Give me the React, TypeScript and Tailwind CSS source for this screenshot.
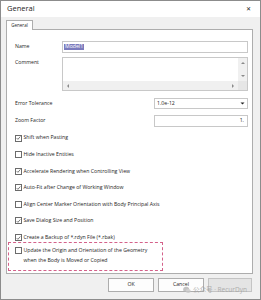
import React from 'react';

const font = { fontFamily: '"Open Sans", "Noto Sans CJK SC", sans-serif' };

const Check: React.FC<{ checked?: boolean }> = ({ checked }) => (
  <span className="w-[7px] h-[7px] border border-[#6b6b6b] bg-white flex items-center justify-center shrink-0">
    {checked && (
      <svg width="6" height="6" viewBox="0 0 6 6">
        <path d="M0.8 3.1 L2.3 4.6 L5.2 1.2" fill="none" stroke="#333" strokeWidth="0.8" />
      </svg>
    )}
  </span>
);

const options: { label: string; checked: boolean }[] = [
  { label: 'Shift when Pasting', checked: true },
  { label: 'Hide Inactive Entities', checked: false },
  { label: 'Accelerate Rendering when Controlling View', checked: true },
  { label: 'Auto-Fit after Change of Working Window', checked: true },
  { label: 'Align Center Marker Orientation with Body Principal Axis', checked: false },
  { label: 'Save Dialog Size and Position', checked: true },
  { label: 'Create a Backup of *.rdyn File (*.rbak)', checked: true },
];

const Arrow: React.FC<{ dir: 'up' | 'down' | 'left' | 'right' }> = ({ dir }) => {
  const d = {
    up: 'M1 4 L3 2 L5 4 Z',
    down: 'M1 2 L3 4 L5 2 Z',
    left: 'M4 1 L2 3 L4 5 Z',
    right: 'M2 1 L4 3 L2 5 Z',
  }[dir];
  return (
    <svg width="6" height="6" viewBox="0 0 6 6">
      <path d={d} fill="#8a8a8a" />
    </svg>
  );
};

export default function App() {
  return (
    <div
      className="w-[261px] h-[300px] bg-[#f0f0f0] border border-[#8c8c8c] flex flex-col relative overflow-hidden text-[#1e1e1e]"
      style={font}
    >
      <div className="h-[16px] bg-white flex items-center justify-between pl-[6px] pr-[9px]">
        <span className="text-[7.5px] leading-none">General</span>
        <span className="text-[6px] leading-none">✕</span>
      </div>

      <div className="pl-[5px] pt-[3px]">
        <div className="w-[27px] h-[10px] border border-b-0 border-[#adadad] bg-white text-[4.5px] flex items-center justify-center relative z-10 -mb-px">
          General
        </div>
        <div className="w-[247px] h-[245px] border border-[#adadad] bg-white pl-[8px] pr-[4px] flex flex-col text-[5.2px] leading-none">
          <div className="mt-[11px] flex items-center h-[12px]">
            <span className="w-[47px]">Name</span>
            <div className="flex-1 h-[12px] border border-[#c8c8c8] flex items-center pl-px">
              <span className="bg-[#7b7bbd] text-white px-px">Model1</span>
            </div>
          </div>

          <div className="mt-[4px] flex items-start">
            <span className="w-[47px] pt-[3px]">Comment</span>
            <div className="flex-1 h-[34px] border border-[#c8c8c8] flex flex-col">
              <div className="flex-1 flex">
                <div className="flex-1" />
                <div className="w-[9px] bg-[#f0f0f0] flex flex-col items-center justify-between py-[2px]">
                  <Arrow dir="up" />
                  <Arrow dir="down" />
                </div>
              </div>
              <div className="h-[9px] flex">
                <div className="flex-1 bg-[#f0f0f0] flex items-center justify-between px-[2px]">
                  <Arrow dir="left" />
                  <Arrow dir="right" />
                </div>
                <div className="w-[9px] bg-[#e6e6e6]" />
              </div>
            </div>
          </div>

          <div className="mt-[7px] flex items-center justify-between">
            <span>Error Tolerance</span>
            <div className="w-[94px] h-[11px] border border-[#c8c8c8] flex items-center justify-between pl-[2px] pr-[2px]">
              <span>1.0e-12</span>
              <svg width="5" height="5" viewBox="0 0 5 5">
                <path d="M0.5 1.5 L2.5 3.5 L4.5 1.5 Z" fill="#222" />
              </svg>
            </div>
          </div>

          <div className="mt-[6px] flex items-center justify-between">
            <span>Zoom Factor</span>
            <div className="w-[94px] h-[12px] border border-[#c8c8c8] flex items-center justify-end pr-[3px]">
              <span>1.</span>
            </div>
          </div>

          <div className="mt-[7.5px] flex flex-col gap-[9.6px]">
            {options.map((o) => (
              <div key={o.label} className="flex items-center gap-[1.5px] h-[7px]">
                <Check checked={o.checked} />
                <span className="whitespace-nowrap">{o.label}</span>
              </div>
            ))}
          </div>

          <div className="mt-[0.5px] -ml-[7px] w-[155px] h-[29px] border border-dashed border-[#d4618a] pl-[6px] pt-[4.5px] flex flex-col gap-[4px]">
            <div className="flex items-center gap-[1.5px] h-[7px]">
              <Check />
              <span className="whitespace-nowrap">Update the Origin and Orientation of the Geometry</span>
            </div>
            <span className="pl-[8.5px] whitespace-nowrap">when the Body is Moved or Copied</span>
          </div>
        </div>
      </div>

      <div className="mt-[4px] flex justify-end gap-[4px] pr-[8px] text-[5.2px]">
        <div className="w-[46px] h-[14px] border border-[#adadad] bg-[#fdfdfd] flex items-center justify-center">OK</div>
        <div className="w-[46px] h-[14px] border border-[#adadad] bg-[#fdfdfd] flex items-center justify-center">Cancel</div>
        <div className="w-[44px] h-[14px] border border-[#c4c4c4] bg-[#e4e4e4]" />
      </div>

      <div className="absolute left-[182px] top-[285px] flex items-center gap-[2px] text-[#a0a0a0] opacity-80">
        <svg width="8" height="8" viewBox="0 0 8 8">
          <ellipse cx="3.2" cy="3.4" rx="3" ry="2.6" fill="#b5b5b5" />
          <ellipse cx="5.2" cy="5" rx="2.5" ry="2.1" fill="#c8c8c8" />
        </svg>
        <span className="text-[6.5px] leading-none whitespace-nowrap">公众号 · RecurDyn</span>
      </div>
    </div>
  );
}
